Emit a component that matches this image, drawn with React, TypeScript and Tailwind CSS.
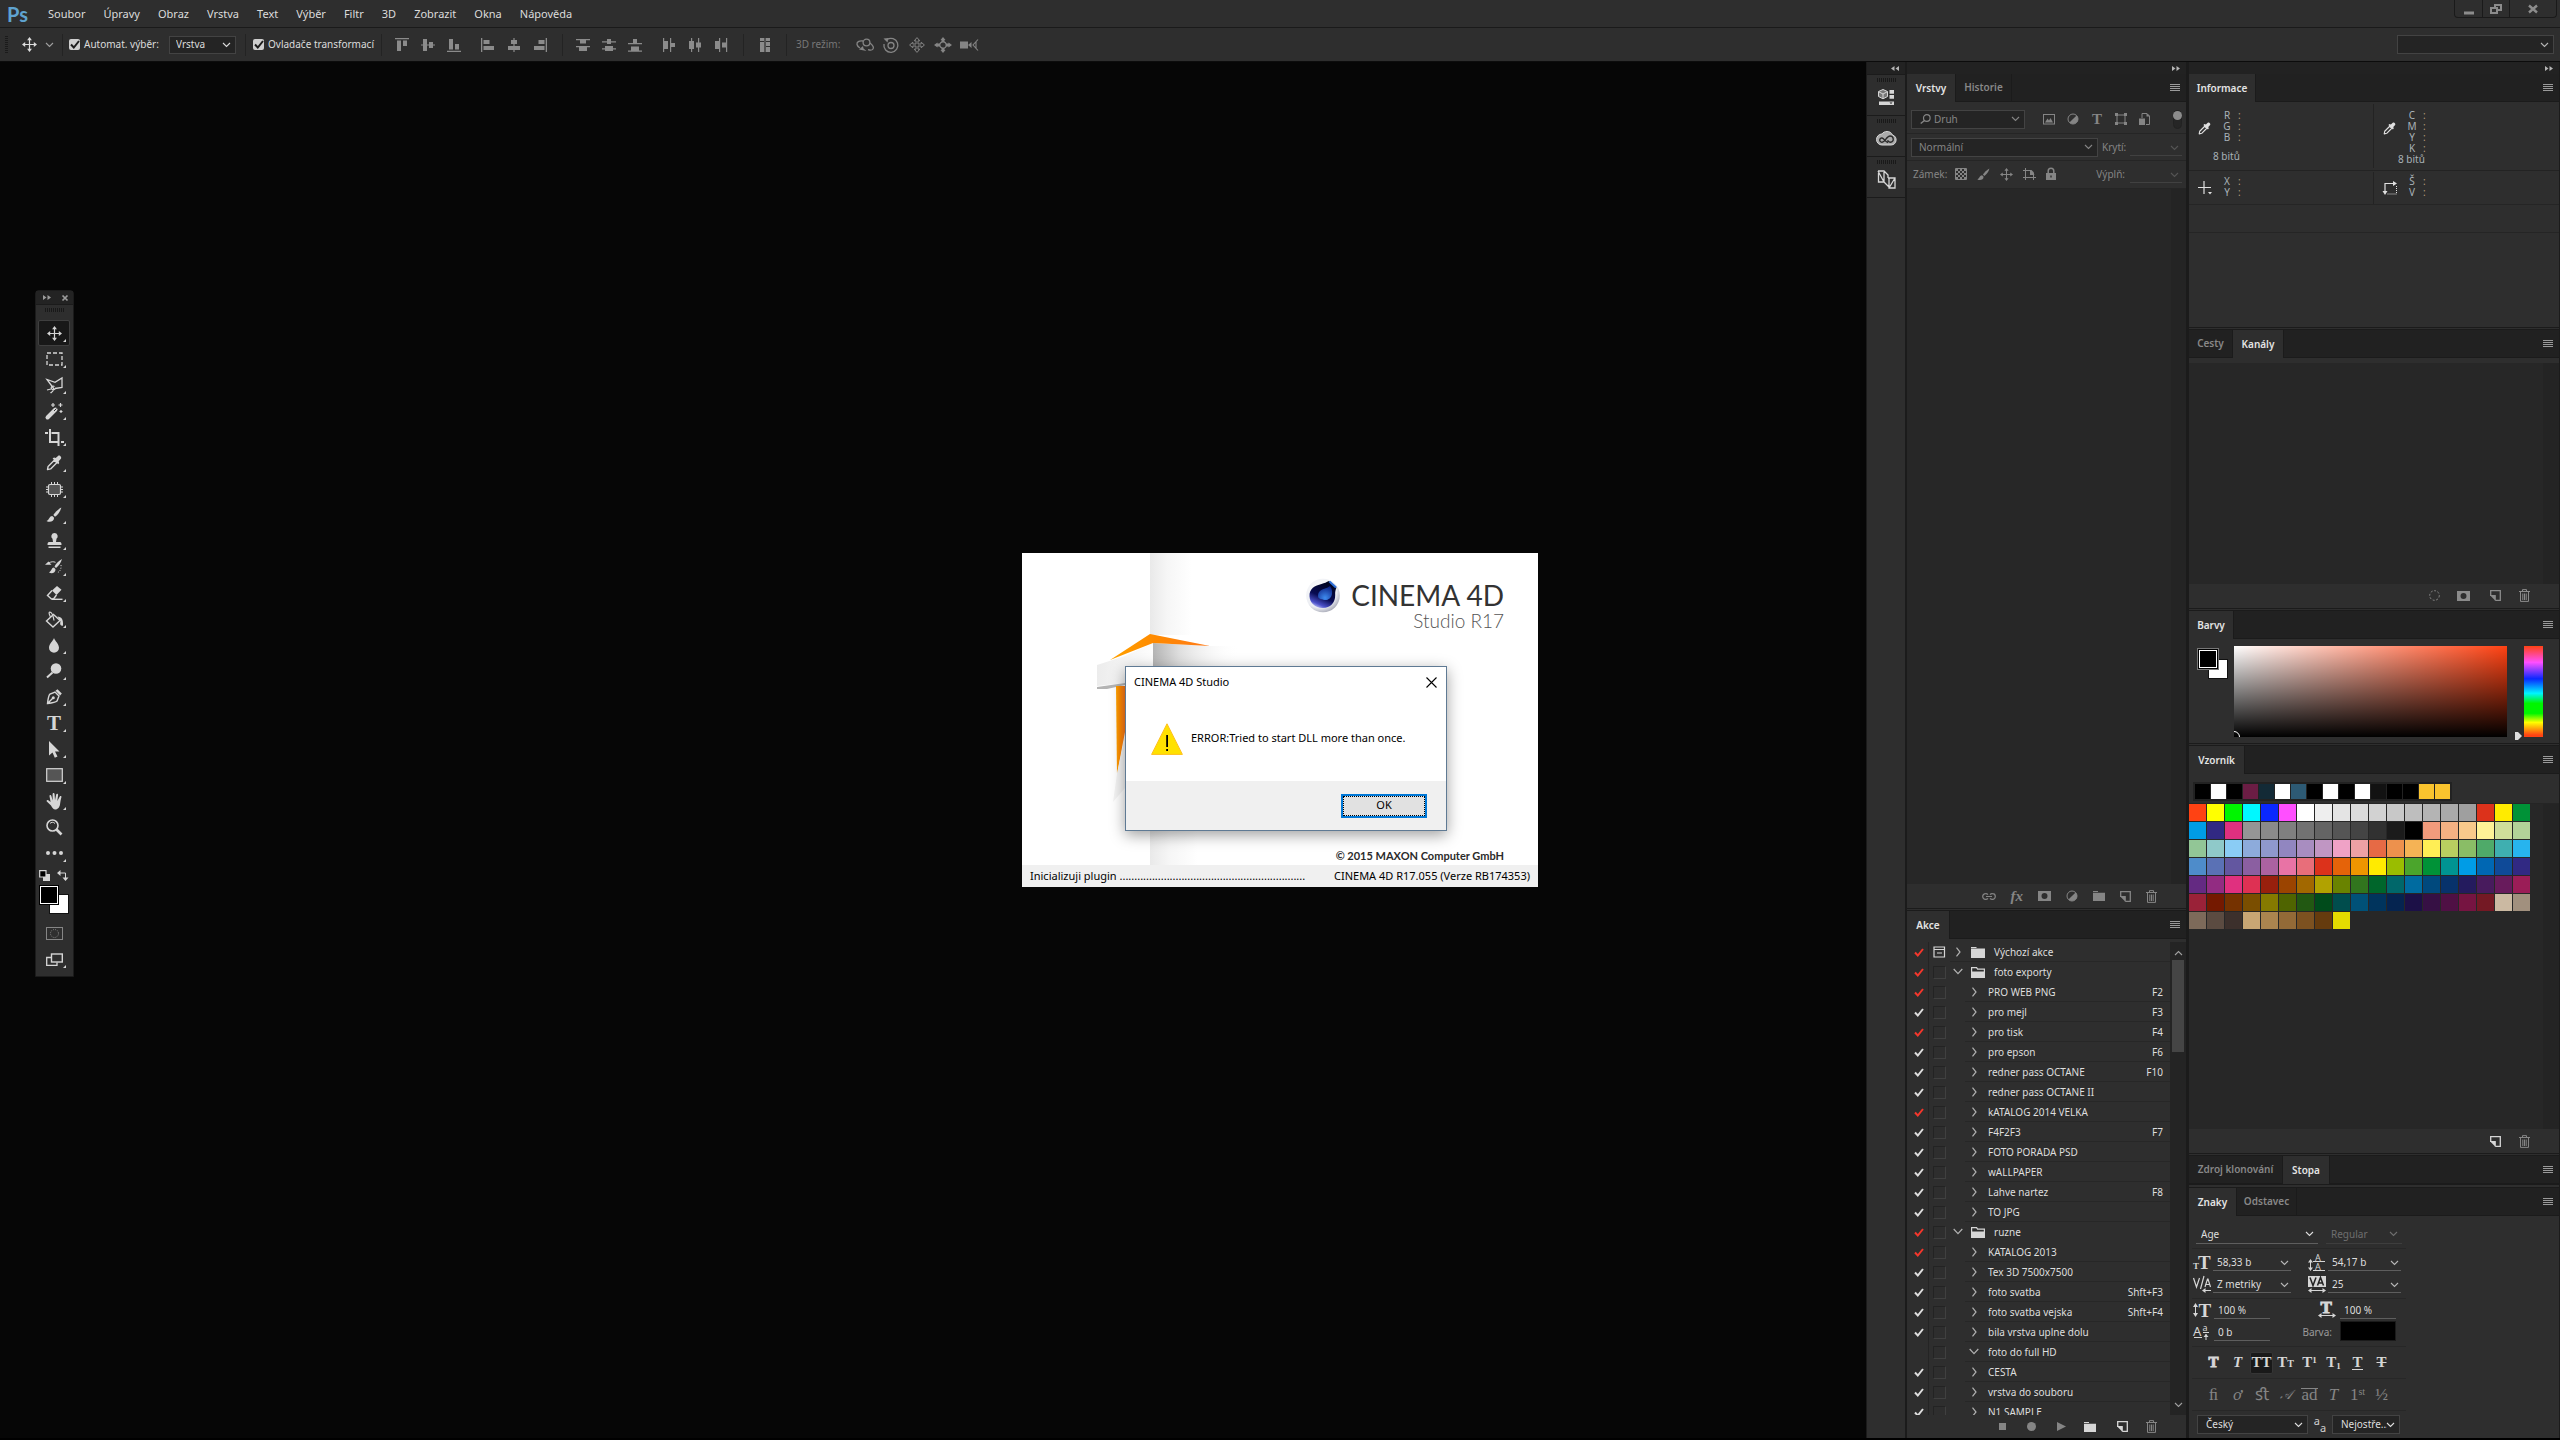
import React, { ReactNode } from "react";

const CZ = "font-['Noto_Sans','Open_Sans',sans-serif]";

/* ---------- small drawing helpers ---------- */

type IconProps = { w?: number; h?: number; box?: string; children: ReactNode; className?: string };

function Icon({ w = 16, h = 16, box, children, className = "" }: IconProps) {
  return (
    <svg
      width={w}
      height={h}
      viewBox={box ?? `0 0 ${w} ${h}`}
      fill="none"
      stroke="none"
      aria-hidden="true"
      className={`block shrink-0 overflow-visible ${className}`}
    >
      {children}
    </svg>
  );
}

function Chevron({ className = "" }: { className?: string }) {
  return (
    <Icon w={9} h={6} className={className}>
      <path d="M1 1l3.5 3.5L8 1" stroke="currentColor" strokeWidth="1.1" />
    </Icon>
  );
}

function MoveGlyph({ size = 16, className = "" }: { size?: number; className?: string }) {
  return (
    <Icon w={size} h={size} box="0 0 16 16" className={className}>
      <path d="M8 2v12M2 8h12" stroke="currentColor" strokeWidth="1.3" />
      <path
        d="M8 0l2.6 3.4H5.4zM8 16l2.6-3.4H5.4zM0 8l3.4-2.6v5.2zM16 8l-3.4-2.6v5.2z"
        fill="currentColor"
      />
    </Icon>
  );
}

function Eyedropper({ size = 16 }: { size?: number }) {
  return (
    <Icon w={size} h={size} box="0 0 16 16">
      <path d="M1.500 14.600l.6-3.200L8.300 5.200l2.500 2.500-6.200 6.200z" stroke="currentColor" strokeWidth="1.400" strokeLinejoin="round" />
      <path
        d="M6.600 3.600l1.400-1 1.700.5L12 .9c1.500-1.400 4.200 1.300 2.900 2.900l-2.200 2.400.5 1.700-1 1.400z"
        fill="currentColor"
      />
    </Icon>
  );
}

function BrushGlyph({ size = 16 }: { size?: number }) {
  return (
    <Icon w={size} h={size} box="0 0 16 16">
      <path d="M15.300.6c-3 1.600-6.500 4.800-8 7.500l1.700 1.700C11.800 8 14.600 4 15.300.6z" fill="currentColor" />
      <path d="M6.300 9c-3 0-2.700 3.600-5.800 5 3 1.800 7.700.8 7.600-3.200z" fill="currentColor" />
    </Icon>
  );
}

function TrashGlyph() {
  return (
    <Icon w={11} h={13}>
      <path d="M0 2.500h11M3.500 2V.6h4V2M1.500 3v9.400h8V3M3.800 4.500v6.500M5.500 4.500v6.500M7.200 4.500v6.500" stroke="currentColor" strokeWidth="1" />
    </Icon>
  );
}

function NewGlyph() {
  return (
    <Icon w={11} h={11}>
      <path d="M.7 5V.7h9.600v9.600H5.500" stroke="currentColor" strokeWidth="1.300" />
      <path d="M.2 5.600h5v5z" fill="currentColor" />
      <path d="M5.300 5.300v5.500M0 5.500h5.500" stroke="currentColor" />
    </Icon>
  );
}

function MaskGlyph() {
  return (
    <Icon w={13} h={10}>
      <path d="M0 0h13v10H0zM6.500 2a3 3 0 100 6 3 3 0 000-6z" fill="currentColor" fillRule="evenodd" />
    </Icon>
  );
}

function HalfGlyph() {
  return (
    <Icon w={12} h={12}>
      <circle cx="6" cy="6" r="5" stroke="currentColor" />
      <path d="M9.600 2.400A5 5 0 012.400 9.600z" fill="currentColor" />
    </Icon>
  );
}

function FolderGlyph({ open = false, className = "" }: { open?: boolean; className?: string }) {
  return (
    <Icon w={14} h={12} className={className}>
      {open ? (
        <>
          <path d="M.6 6V1.600h5l1 1.500h6.800V6" stroke="currentColor" strokeWidth="1.200" />
          <path d="M0 5.500h14V12H0z" fill="currentColor" />
        </>
      ) : (
        <path d="M0 1h5.500v1H0zM0 2.600h14V12H0z" fill="currentColor" />
      )}
    </Icon>
  );
}

function CheckGlyph() {
  return (
    <Icon w={10} h={9}>
      <path d="M1 4.500l2.800 3L9 1" stroke="currentColor" strokeWidth="2" />
    </Icon>
  );
}

function DoubleArrow({ left = false }: { left?: boolean }) {
  return (
    <Icon w={8} h={5} className={left ? "rotate-180" : ""}>
      <path d="M0 0l3.500 2.500L0 5zM4.500 0L8 2.500 4.500 5z" fill="currentColor" />
    </Icon>
  );
}

function Grip() {
  return (
    <div className="mx-auto flex gap-px">
      {Array.from({ length: 10 }, (_, i) => (
        <span key={i} className="h-1 w-px bg-[#191919]" />
      ))}
    </div>
  );
}

/* ---------- shared controls ---------- */

function Select({
  label,
  value,
  className,
  pad = "pl-2",
}: {
  label: string;
  value: string;
  className: string;
  pad?: string;
}) {
  return (
    <div className={`relative flex items-center ${className}`}>
      <select
        aria-label={label}
        defaultValue={value}
        className={`h-full w-full appearance-none overflow-hidden bg-transparent pr-3 outline-none ${pad}`}
      >
        <option>{value}</option>
      </select>
      <Chevron className="pointer-events-none absolute right-1" />
    </div>
  );
}

const BOXED = "border border-[#434343] bg-[#242424]";

function MenuLines() {
  return (
    <button aria-label="Nabídka panelu" className="mr-[6px] ml-auto flex flex-col gap-px">
      {[0, 1, 2, 3].map((i) => (
        <span key={i} className="h-px w-[10px] bg-[#9a9a9a]" />
      ))}
    </button>
  );
}

function Tabs({ items, active }: { items: [string, string][]; active: number }) {
  return (
    <div role="tablist" className="flex h-7 shrink-0 items-center bg-[#212121]">
      {items.map(([name, width], i) => (
        <button
          key={name}
          role="tab"
          aria-selected={i === active}
          className={`h-full shrink-0 border-r border-[#1b1b1b] text-center font-semibold whitespace-nowrap ${width} ${
            i === active ? "bg-[#2e2e2e] text-[#e4e4e4]" : "border-b text-[#888]"
          }`}
        >
          {name}
        </button>
      ))}
      <div className="flex h-full flex-1 items-center border-b border-[#1b1b1b]">
        <MenuLines />
      </div>
    </div>
  );
}

const Gap = ({ tall = false }: { tall?: boolean }) => (
  <div className={`shrink-0 border-y border-[#1b1b1b] bg-[#2e2e2e] ${tall ? "h-1" : "h-[3px]"}`} />
);

/* ---------- top bars ---------- */

const MENUS = ["Soubor", "Úpravy", "Obraz", "Vrstva", "Text", "Výběr", "Filtr", "3D", "Zobrazit", "Okna", "Nápověda"];

function MenuBar() {
  return (
    <header className="flex h-7 shrink-0 items-center border-b border-[#1a1a1a] bg-[#2e2e2e] text-[11px] text-[#dcdcdc]">
      <span className="w-[39px] pl-[7px] font-['Lato'] text-[20px] leading-6 font-bold text-[#5fa3d0]">Ps</span>
      <nav className="flex">
        {MENUS.map((m) => (
          <button key={m} className="px-[9px] leading-6">
            {m}
          </button>
        ))}
      </nav>
      <div className="mr-[3px] ml-auto flex h-[18px] self-start rounded-b border border-t-0 border-[#1a1a1a] text-[#8c8c8c]">
        <button aria-label="Minimalizovat" className="flex w-7 items-center justify-center border-r border-[#1a1a1a]">
          <Icon w={10} h={12}>
            <path d="M0 8.500h10v3H0z" fill="currentColor" />
          </Icon>
        </button>
        <button aria-label="Obnovit" className="flex w-[27px] items-center justify-center border-r border-[#1a1a1a]">
          <Icon w={12} h={10}>
            <path d="M5 4V1h6v5H8M1 4h6v5H1z" stroke="currentColor" strokeWidth="2" />
          </Icon>
        </button>
        <button aria-label="Zavřít" className="flex w-[46px] items-center justify-center">
          <Icon w={10} h={8}>
            <path d="M1 .5l8 7M9 .5l-8 7" stroke="currentColor" strokeWidth="2.400" />
          </Icon>
        </button>
      </div>
    </header>
  );
}

const ALIGN: string[] = [
  "M0 0h14v1.300H0zM2 2.500h4V13H2zM8 2.500h4V8H8z",
  "M0 6.400h14v1.200H0zM2 1h4v12H2zM8 4h4v6H8z",
  "M0 12.700h14V14H0zM2 1h4v10.500H2zM8 6h4v5.500H8z",
  "M0 0h1.300v14H0zM2.500 2h6v4h-6zM2.500 8H13v4H2.500z",
  "M6.400 0h1.200v14H6.400zM4 2h6v4H4zM1 8h12v4H1z",
  "M12.700 0H14v14h-1.300zM5.500 2h6v4h-6zM1 8h10.500v4H1z",
];
const DISTRIBUTE: string[] = [
  "M0 1h14v1.200H0zM4 2h6v3.500H4zM0 8h14v1.200H0zM3 9h8v4H3z",
  "M0 3.200h14v1.200H0zM5 1h4v5H5zM0 10.200h14v1.200H0zM3 8h8v5H3z",
  "M0 5h14v1.200H0zM5 1h4v4.500H5zM0 12.500h14v1.200H0zM3 8.500h8v4H3z",
  "M1 0h1.200v14H1zM2 3h4v8H2zM8 0h1.200v14H8zM9 5h4v4H9z",
  "M3 0h1.200v14H3zM1 3h5v8H1zM10 0h1.200v14H10zM8 4.500h5v5H8z",
  "M5 0h1.200v14H5zM1 3h4v8H1zM12 0h1.200v14H12zM8 4.500h4v5H8z",
];

function PathIcons({ names, paths }: { names: string; paths: string[] }) {
  return (
    <div className="flex gap-3">
      {paths.map((d, i) => (
        <button key={i} aria-label={`${names} ${i + 1}`}>
          <Icon w={14} h={14}>
            <path d={d} fill="currentColor" />
          </Icon>
        </button>
      ))}
    </div>
  );
}

function TickBox({ label }: { label: string }) {
  return (
    <label className="flex items-center gap-1 whitespace-nowrap">
      <span className="relative flex size-[11px] items-center justify-center rounded-xs bg-[#cfcfcf] text-[#1c1c1c]">
        <input type="checkbox" defaultChecked className="absolute inset-0 appearance-none" />
        <CheckGlyph />
      </span>
      {label}
    </label>
  );
}

const GROUP = "flex h-[22px] shrink-0 items-center border-r border-[#232323]";

function OptionsBar() {
  return (
    <div className="flex h-[34px] shrink-0 items-center border-b border-[#0c0c0c] bg-[#2e2e2e] text-[#dcdcdc]">
      <div className={`w-[63px] ${GROUP}`}>
        <div className="ml-[5px] flex flex-col gap-px">
          {Array.from({ length: 9 }, (_, i) => (
            <span key={i} className="h-px w-[3px] bg-[#1b1b1b]" />
          ))}
        </div>
        <MoveGlyph size={15} className="ml-[14px]" />
        <Chevron className="ml-2 text-[#a0a0a0]" />
      </div>
      <div className={`w-[183px] justify-between pr-[9px] pl-[6px] ${GROUP}`}>
        <TickBox label="Automat. výběr:" />
        <Select label="Automatický výběr" value="Vrstva" pad="pl-[6px]" className={`h-[18px] w-[67px] ${BOXED}`} />
      </div>
      <div className={`w-[136px] pl-[7px] ${GROUP}`}>
        <TickBox label="Ovladače transformací" />
      </div>
      <div className={`w-[181px] gap-5 pl-[13px] text-[#8b8b8b] ${GROUP}`}>
        <PathIcons names="Zarovnat" paths={ALIGN.slice(0, 3)} />
        <PathIcons names="Zarovnat svisle" paths={ALIGN.slice(3)} />
      </div>
      <div className={`w-[181px] gap-5 pl-[13px] text-[#8b8b8b] ${GROUP}`}>
        <PathIcons names="Rozmístit" paths={DISTRIBUTE.slice(0, 3)} />
        <PathIcons names="Rozmístit vodorovně" paths={DISTRIBUTE.slice(3)} />
      </div>
      <div className={`w-[43px] justify-center text-[#8b8b8b] ${GROUP}`}>
        <PathIcons names="Automaticky zarovnat" paths={["M2 0h4v3H2zM2 4h4v10H2zM6.600 0h.8v14h-.8zM8 0h4v3H8zM8 4h4v4H8zM8 9h4v5H8z"]} />
      </div>
      <span className="w-[69px] shrink-0 pl-[9px] whitespace-nowrap text-[#777]">3D režim:</span>
      <div className="flex gap-2 text-[#858585]">
        <Icon w={18} h={16}>
          <circle cx="10.500" cy="5.500" r="3.400" stroke="currentColor" strokeWidth="1.300" />
          <path d="M7 4C3 3.500.5 5 1 7.500c.3 1.500 1.500 2.600 3 3.500M14 6c2.500 2 4 4.500 3 6-.8 1.200-3 1.300-5 .6" stroke="currentColor" strokeWidth="1.300" />
          <path d="M3 12.500l4-3.500.5 2.500 3 2.500z" fill="currentColor" />
        </Icon>
        <Icon w={18} h={16}>
          <circle cx="9" cy="8.500" r="3" stroke="currentColor" strokeWidth="1.300" />
          <path d="M5 2.500a7 7 0 11-3 4.500" stroke="currentColor" strokeWidth="1.300" />
          <path d="M1.500 1.500l5-.5-1 4.500z" fill="currentColor" />
        </Icon>
        <Icon w={18} h={16}>
          <path
            d="M9 .6l2.800 3.200H10V7h3.200V5.200L16.400 8l-3.200 2.800V9H10v3.200h1.800L9 15.400l-2.800-3.200H8V9H4.800v1.800L1.600 8l3.200-2.800V7H8V3.800H6.200z"
            stroke="currentColor"
            strokeWidth="1"
          />
        </Icon>
        <Icon w={18} h={16}>
          <circle cx="9" cy="8" r="3.200" stroke="currentColor" strokeWidth="1.200" />
          <path d="M9 0l2.500 3h-1v2h-3V3h-1zM9 16l2.500-3h-1v-2h-3v2h-1zM0 8l3.500-2.500v1H6v3H3.500v1zM18 8l-3.500-2.500v1H12v3h2.500v1z" fill="currentColor" />
        </Icon>
        <Icon w={18} h={16}>
          <path d="M0 4.500h8v7H0zM8 8l3.500-3v6z" fill="currentColor" />
          <path d="M18 2.500L13 8l5 5.500M16 4.500v7" stroke="currentColor" strokeWidth="1.100" />
        </Icon>
      </div>
      <Select label="Pracovní plocha" value="" className={`mr-[6px] ml-auto h-[19px] w-[157px] text-[#b5b5b5] ${BOXED}`} />
    </div>
  );
}

/* ---------- tool palette ---------- */

const TOOLS: [string, ReactNode][] = [
  ["Přesun", <MoveGlyph key="i" size={15} />],
  [
    "Výběr obdélníkem",
    <Icon key="i" w={17} h={14}>
      <rect x="1" y="1" width="15" height="12" stroke="currentColor" strokeWidth="1.300" strokeDasharray="4 2" />
    </Icon>,
  ],
  [
    "Laso",
    <Icon key="i" w={17} h={17}>
      <path d="M8 12L1 2.500l8 2.800L16 1v9.500l-7 1" stroke="currentColor" strokeWidth="1.300" />
      <path d="M8.500 9.500c-2-1-4 .5-3 2.200s4 1 3.500-.7M7.500 12.500C7 15 5 15.500 4.500 16M5 12l-4 1" stroke="currentColor" strokeWidth="1.200" />
    </Icon>,
  ],
  [
    "Kouzelná hůlka",
    <Icon key="i" w={18} h={17}>
      <path d="M2.500 14.500L10.500 6.500" stroke="currentColor" strokeWidth="4" strokeLinecap="round" />
      <path d="M9 8l2.500-2.500" stroke="#2e2e2e" strokeWidth="1" />
      <path d="M8 0v4M6 2h4M15.500 0v4M13.500 2h4M16 7v3M14.500 8.500h3" stroke="currentColor" strokeWidth="1.200" />
    </Icon>,
  ],
  [
    "Oříznutí",
    <Icon key="i" w={19} h={17}>
      <path d="M0 4h3M5 0v13h9M6.500 4H13.500v13M16 13h3" stroke="currentColor" strokeWidth="2" />
    </Icon>,
  ],
  ["Kapátko", <Eyedropper key="i" />],
  [
    "Záplata",
    <Icon key="i" w={17} h={15}>
      <rect x="2.500" y="2.500" width="12" height="10" rx="1.500" fill="#555" stroke="currentColor" strokeWidth="1.200" />
      <path d="M5.500 0v3M8.500 0v3M11.500 0v3M5.500 12v3M8.500 12v3M11.500 12v3M0 5h3M0 7.500h3M0 10h3M14 5h3M14 7.500h3M14 10h3" stroke="currentColor" />
    </Icon>,
  ],
  ["Štětec", <BrushGlyph key="i" />],
  [
    "Klonovací razítko",
    <Icon key="i" w={15} h={16}>
      <path d="M7.500 0a3.200 3.200 0 012 5.700L9 9h4c1 0 1.500.7 1.500 3H.5c0-2.300.5-3 1.500-3h4l-.5-3.300A3.200 3.200 0 017.500 0zM1.500 13.500h12V15h-12z" fill="currentColor" />
    </Icon>,
  ],
  [
    "Štětec historie",
    <Icon key="i" w={18} h={16}>
      <path d="M17 0c-3 1.500-6 4.500-7.500 7.500l1.500 1.500c3-2.500 5-5.500 6-9zM9 8.500c-2.600 0-2.200 3.500-5 5 2.600 1.700 6.600.6 6.500-3.200zM0 5.800L3.500 2.500l3 3.300z" fill="currentColor" />
      <path d="M4 4c2-1.500 4.500-1.500 6.500-.7" stroke="currentColor" />
      <path d="M16 6c.5 4-1 7-4.500 8" stroke="currentColor" strokeDasharray="1 1.500" />
    </Icon>,
  ],
  [
    "Guma",
    <Icon key="i" w={17} h={15}>
      <path d="M6 4.500L11 0l4.500 3.700-5 5.300z" fill="currentColor" />
      <path d="M6 4.500L1.500 9.500 5.500 13h2l3-4" stroke="currentColor" strokeWidth="1.400" />
      <path d="M6 13.300h10.500" stroke="currentColor" strokeWidth="1.400" />
    </Icon>,
  ],
  [
    "Plechovka barvy",
    <Icon key="i" w={19} h={17}>
      <path d="M8.500 3.500l6.500 6-7 6.500L1.500 10z" stroke="currentColor" strokeWidth="1.400" />
      <path d="M9 9.500c-.5-3-2-8-4-8.300C3 1 5 5 5.500 6" stroke="currentColor" strokeWidth="1.200" />
      <path d="M12.500 5.500c4 .2 6 3 5.500 9-2.500 1-3.500-1.500-2.500-4z" fill="currentColor" />
    </Icon>,
  ],
  [
    "Rozostření",
    <Icon key="i" w={12} h={15}>
      <path d="M6 0c1 3 5 6 5 9.800A5 5 0 011 9.800C1 6 5 3 6 0z" fill="currentColor" />
    </Icon>,
  ],
  [
    "Zesvětlení",
    <Icon key="i" w={16} h={16}>
      <circle cx="10" cy="5.500" r="5.300" fill="currentColor" />
      <path d="M6.500 9.500L1 14.500" stroke="currentColor" strokeWidth="2" />
    </Icon>,
  ],
  [
    "Pero",
    <Icon key="i" w={16} h={16}>
      <path d="M1.500 14.500C2 10 2.500 6.500 4 5l5-2 4 4-2 5c-1.500 1.500-5 2-9.500 2.500zM1.500 14.500L7 9" stroke="currentColor" strokeWidth="1.400" />
      <circle cx="7.300" cy="8.700" r="1.500" fill="currentColor" />
      <path d="M9.500 1.800L11.500.2l4.300 4.300-1.600 2z" fill="currentColor" />
    </Icon>,
  ],
  ["Text", <span key="i" className="font-['Liberation_Serif'] text-[21px] leading-none font-bold">T</span>],
  [
    "Výběr cesty",
    <Icon key="i" w={12} h={17}>
      <path d="M1 0l10.500 10.500H7l2.500 5-2.700 1.300-2.300-5.300L1 14.500z" fill="currentColor" />
    </Icon>,
  ],
  [
    "Obdélník",
    <Icon key="i" w={17} h={14}>
      <rect x=".7" y=".7" width="15.600" height="12.600" fill="#555" stroke="currentColor" strokeWidth="1.200" />
    </Icon>,
  ],
  [
    "Ručička",
    <Icon key="i" w={17} h={17}>
      <path
        d="M5 12.500L.8 8.500C0 7.400 1.400 6.400 2.300 7.200L4.600 9 3.500 3.200c-.2-1.400 1.500-1.600 1.800-.4L6.700 7.500 6.600 1.200c0-1.500 1.900-1.500 2 0L9 7.200 10.200 1.600c.3-1.300 2-1 1.900.3l-.8 6 2.500-4.500c.6-1 2-.4 1.600.8C14.600 7 14.400 9 14 11.500 13.600 14 12 16.500 9.300 16.500c-2 0-3.200-1.700-4.300-4z"
        fill="currentColor"
      />
    </Icon>,
  ],
  [
    "Lupa",
    <Icon key="i" w={17} h={17}>
      <circle cx="6.500" cy="6.500" r="5.500" stroke="currentColor" strokeWidth="1.600" />
      <path d="M4 4.500c1-1.500 3.500-1.700 5 0" stroke="currentColor" />
      <path d="M10.500 10.500l5 5" stroke="currentColor" strokeWidth="2.600" />
    </Icon>,
  ],
  [
    "Další nástroje",
    <Icon key="i" w={17} h={4}>
      <path d="M2 0a2 2 0 100 4 2 2 0 000-4zM8.500 0a2 2 0 100 4 2 2 0 000-4zM15 0a2 2 0 100 4 2 2 0 000-4z" fill="currentColor" />
    </Icon>,
  ],
];

function ToolButton({ name, icon, on = false, corner = true }: { name: string; icon: ReactNode; on?: boolean; corner?: boolean }) {
  return (
    <button
      aria-label={name}
      className={`relative flex h-[26px] w-8 items-center justify-center rounded-xs border ${
        on ? "border-[#3f3f3f] bg-[#181818]" : "border-transparent"
      }`}
    >
      {icon}
      {corner && (
        <Icon w={3} h={3} className="absolute right-[3px] bottom-[3px]">
          <path d="M3 0v3H0z" fill="currentColor" />
        </Icon>
      )}
    </button>
  );
}

function ToolPalette() {
  return (
    <aside className="absolute top-[228px] left-[35px] flex w-[39px] flex-col items-center rounded-t border border-[#1b1b1b] bg-[#2e2e2e] pb-1 text-[#d6d6d6]">
      <div className="flex h-[14px] w-full shrink-0 items-center justify-between border-b border-[#1b1b1b] bg-[#232323] px-[7px] text-[#9b9b9b]">
        <DoubleArrow />
        <Icon w={6} h={6} className="-mr-[2px]">
          <path d="M.5.5l5 5M5.500.5l-5 5" stroke="currentColor" strokeWidth="1.700" />
        </Icon>
      </div>
      <div className="mt-[3px] mb-2">
        <Grip />
      </div>
      <div className="flex flex-col self-start pl-[2px]">
        {TOOLS.map(([name, icon], i) => (
          <ToolButton key={name} name={name} icon={icon} on={i === 0} corner={name !== "Lupa"} />
        ))}
      </div>
      <div className="mt-1 flex w-full justify-between px-[3px]">
        <button aria-label="Výchozí barvy">
          <Icon w={11} h={11}>
            <path d="M4 4h7v7H4z" fill="#d6d6d6" />
            <path d="M.7.7h6.300v6.300H.7z" fill="#000" stroke="#d6d6d6" strokeWidth="1.200" />
          </Icon>
        </button>
        <button aria-label="Prohodit barvy" className="mr-[2px]">
          <Icon w={11} h={11}>
            <path d="M2 3h6.500v5" stroke="currentColor" />
            <path d="M0 3l3.500-3v6zM8.500 11l3-3.500h-6z" fill="currentColor" />
          </Icon>
        </button>
      </div>
      <div className="relative mt-1 mr-px h-[29px] w-[30px]">
        <button aria-label="Barva pozadí" className="absolute right-0 bottom-0 size-[20px] border border-[#111] bg-white" />
        <button aria-label="Barva popředí" className="absolute top-0 left-0 size-[20px] border border-black bg-white p-px">
          <span className="block size-full bg-black" />
        </button>
      </div>
      <div className="mt-[6px] flex flex-col self-start pl-[2px]">
        <ToolButton
          name="Rychlá maska"
          corner={false}
          icon={
            <Icon w={17} h={13} className="text-[#858585]">
              <rect x=".5" y=".5" width="16" height="12" stroke="currentColor" />
              <circle cx="8.500" cy="6.500" r="4" stroke="currentColor" strokeDasharray="1 1.100" />
            </Icon>
          }
        />
        <ToolButton
          name="Režim obrazovky"
          icon={
            <Icon w={17} h={13}>
              <path d="M5 4.500H.7v7.800H11V9.500" stroke="currentColor" strokeWidth="1.300" />
              <rect x="5.500" y="1" width="10.800" height="8" fill="#2e2e2e" stroke="currentColor" strokeWidth="1.400" />
            </Icon>
          }
        />
      </div>
    </aside>
  );
}

/* ---------- start-up window with error message ---------- */

function Splash() {
  return (
    <section className="absolute top-1/2 left-1/2 flex h-[334px] w-[516px] -translate-x-1/2 -translate-y-1/2 flex-col bg-white font-['Noto_Sans'] text-[11px] text-black">
      <svg viewBox="0 0 516 312" className="absolute top-0 left-0 h-[312px] w-full" aria-hidden="true">
        <defs>
          <linearGradient id="wall" x1="0" x2="1">
            <stop offset="0" stopColor="#e9e9e9" />
            <stop offset=".4" stopColor="#f6f6f6" />
            <stop offset="1" stopColor="#fff" />
          </linearGradient>
          <linearGradient id="shade" x1="0" x2="1">
            <stop offset="0" stopColor="#b4b4b4" />
            <stop offset=".3" stopColor="#dedede" />
            <stop offset="1" stopColor="#fff" stopOpacity="0" />
          </linearGradient>
          <linearGradient id="roof" x1="0" x2="1">
            <stop offset="0" stopColor="#ffa200" />
            <stop offset=".45" stopColor="#ff8a00" />
            <stop offset="1" stopColor="#ff7a1a" />
          </linearGradient>
          <linearGradient id="slab" x1="0" x2="1">
            <stop offset="0" stopColor="#ececec" />
            <stop offset="1" stopColor="#fdfdfd" />
          </linearGradient>
          <radialGradient id="ball" cx=".4" cy=".35" r=".68">
            <stop offset="0" stopColor="#fff" />
            <stop offset=".75" stopColor="#eceef3" />
            <stop offset="1" stopColor="#a9abb8" />
          </radialGradient>
          <linearGradient id="drop" x1=".7" y1=".1" x2=".3" y2="1">
            <stop offset="0" stopColor="#000420" />
            <stop offset=".55" stopColor="#080b52" />
            <stop offset=".85" stopColor="#4b50c8" />
            <stop offset="1" stopColor="#b9bcf5" />
          </linearGradient>
          <radialGradient id="lens" cx=".5" cy=".85" r=".9">
            <stop offset="0" stopColor="#3f8cf0" />
            <stop offset="1" stopColor="#08197c" />
          </radialGradient>
        </defs>
        <path d="M128 0h42v82h-42z" fill="url(#wall)" />
        <path d="M128 180h48v132h-48z" fill="url(#wall)" />
        <path d="M131 90l57 3h30v40h-87z" fill="url(#shade)" />
        <path d="M75 112l28-9 28-13v40l-28 0-28 3z" fill="url(#slab)" />
        <path d="M75 134l28-4v2l-18 4H75z" fill="#b4b4b4" />
        <path d="M88 107l40-26 60 12-57-3z" fill="url(#roof)" />
        <path d="M94 133h9v46l-8 42z" fill="url(#roof)" />
        <path d="M95 221l8-38v52l-12 14z" fill="#f4f4f4" />
        <circle cx="301" cy="42.500" r="16.800" fill="url(#ball)" />
        <path d="M287.500 43.500c-.5-8 5.500-11 12-12.500 3-.8 5-1.800 7.500-3l7.500 6.500c-1 2.500-1.500 4-1.300 7.500.3 8-5.700 13.500-13 13-7-.3-12.300-5-12.700-11.500z" fill="url(#drop)" />
        <path d="M307.500 28.500l6.500 6" stroke="#2e6fd8" strokeWidth="2.200" fill="none" />
        <path d="M296 43c0-4.500 3-6.500 7-7.500 2-.6 3.500-1.500 5-2.500 1.500 2 2.500 4.500 2 8-.6 4-4 6.500-7.500 6-3.500-.2-6.500-1.500-6.500-4z" fill="url(#lens)" />
      </svg>
      <div className="relative mt-[25px] mr-[34px] self-end text-right font-['Lato'] text-[#333]">
        <h1 className="text-[28px] leading-[34px]">CINEMA 4D</h1>
        <p className="text-[19px] leading-[18px] font-light text-[#555]">Studio R17</p>
      </div>
      <p className="relative mt-auto mr-[34px] mb-[2px] self-end font-['Lato'] text-[11px] leading-[14px] font-bold text-[#2b2b2b]">
        © 2015 MAXON Computer GmbH
      </p>
      <div className="relative flex h-[22px] items-center justify-between bg-[#f0f0f0] px-2 whitespace-nowrap">
        <span>Inicializuji plugin ...............................................................</span>
        <span>CINEMA 4D R17.055 (Verze RB174353)</span>
      </div>
      <div
        role="alertdialog"
        aria-labelledby="err-title"
        className="absolute top-[113px] left-[103px] flex w-[322px] flex-col border border-[#5f7a94] bg-white shadow-[0_4px_14px_rgba(0,0,0,0.38)]"
      >
        <div className="flex h-[30px] items-center justify-between pr-[9px] pl-2">
          <h2 id="err-title">CINEMA 4D Studio</h2>
          <button aria-label="Zavřít">
            <Icon w={11} h={11}>
              <path d="M.5.5l10 10M10.500.5l-10 10" stroke="#000" strokeWidth="1.100" />
            </Icon>
          </button>
        </div>
        <div className="flex h-[84px] items-center gap-2 pl-[25px] whitespace-nowrap">
          <Icon w={32} h={32}>
            <path d="M16 .8L31.400 31.400H.6z" fill="#ffe100" stroke="#ffbf1e" strokeWidth="1" />
            <path d="M15.200 12h1.800v12h-1.800zM15.200 26h1.800v2h-1.800z" fill="#000" />
          </Icon>
          <p className="mb-[2px]">ERROR:Tried to start DLL more than once.</p>
        </div>
        <div className="flex h-[49px] items-center justify-end bg-[#f0f0f0] pr-[19px]">
          <button className="h-6 w-[86px] border-2 border-[#0078d7] bg-[#e1e1e1] outline-1 -outline-offset-3 outline-black outline-dotted">
            OK
          </button>
        </div>
      </div>
    </section>
  );
}

/* ---------- collapsed icon dock ---------- */

function IconDock() {
  const blocks: [string, ReactNode][] = [
    [
      "Vlastnosti",
      <Icon key="i" w={17} h={17}>
        <path d="M5 .5l4.500 2v5L5 9.800.5 7.500v-5z" fill="#777" stroke="currentColor" />
        <path d="M5 5v4.500M5 5L.8 2.800M5 5l4.200-2.200" stroke="currentColor" />
        <path d="M11.500 1H16v3.800h-4.500zM11.500 6H16v3.800h-4.500zM1 12.500h15V16H1z" fill="currentColor" />
        <path d="M11.500 13.500h3l-1.500 1.600z" fill="#222" />
      </Icon>,
    ],
    [
      "Knihovny",
      <Icon key="i" w={21} h={15}>
        <path d="M6 14A5.500 5.500 0 016 3c1.500-3 8.500-4 10.500 1 5.500 1.500 4.500 10-1.500 10z" fill="#aaa" stroke="currentColor" />
        <path d="M12 11.500C9 11 8.500 7.500 6 7s-3.500 4 0 4.300c3 .2 4.500-6.300 8-6.300 4 0 4.500 6 .5 6.300-1.500 0-2-.6-3-2" stroke="#2a2a2a" strokeWidth="1.400" />
      </Icon>,
    ],
    [
      "Kompozice vrstev",
      <Icon key="i" w={19} h={19}>
        <path d="M1 1h6l4 4v3M1 1l0 0L7 12H1.500V3M11 8h7v10h-6V8M12 18l6-10M7 12l5 5M7 2v10" stroke="currentColor" strokeWidth="1.300" />
      </Icon>,
    ],
  ];
  return (
    <aside className="flex w-[38px] shrink-0 flex-col bg-[#2e2e2e] text-[#d6d6d6]">
      <div className="flex h-[13px] shrink-0 items-center justify-end border-b border-[#1b1b1b] bg-[#222] pr-[6px] text-[#b5b5b5]">
        <DoubleArrow left />
      </div>
      {blocks.map(([name, icon]) => (
        <div key={name} className="flex h-[41px] shrink-0 flex-col border-b border-[#1b1b1b] pt-[3px]">
          <Grip />
          <button aria-label={name} className="flex flex-1 items-center justify-center pb-[2px]">
            {icon}
          </button>
        </div>
      ))}
    </aside>
  );
}

/* ---------- layers + actions column ---------- */

function LayersPanel() {
  return (
    <section className="flex min-h-0 flex-1 flex-col">
      <Tabs
        active={0}
        items={[
          ["Vrstvy", "w-[49px]"],
          ["Historie", "w-[56px]"],
        ]}
      />
      <div className="flex h-8 shrink-0 items-center border-b border-[#252525] pt-[3px] pl-1 text-[#858585]">
        <div className={`relative flex h-[19px] w-[114px] items-center ${BOXED}`}>
          <Icon w={11} h={10} className="ml-2">
            <circle cx="6.800" cy="4" r="3.300" stroke="currentColor" strokeWidth="1.200" />
            <path d="M4.500 6.500L.7 9.500" stroke="currentColor" strokeWidth="1.500" />
          </Icon>
          <Select label="Filtr vrstev" value="Druh" className="h-full flex-1" pad="pl-[3px]" />
        </div>
        <div className="ml-[18px] flex items-center gap-3">
          <Icon w={12} h={11}>
            <rect x=".5" y=".5" width="11" height="9.500" stroke="currentColor" />
            <path d="M2 8.500l2.500-4 1.500 2 1.500-2.500 2.500 4.500z" fill="currentColor" />
          </Icon>
          <HalfGlyph />
          <span className="w-3 text-center font-['Liberation_Serif'] text-[15px] leading-none font-bold">T</span>
          <Icon w={12} h={12}>
            <path d="M2 2h8v8H2z" stroke="currentColor" />
            <path d="M0 0h3v3H0zM9 0h3v3H9zM0 9h3v3H0zM9 9h3v3H9z" fill="currentColor" />
          </Icon>
          <Icon w={11} h={12}>
            <path d="M3 5V.5h5l2.500 2.500v8.500H7" stroke="currentColor" />
            <path d="M7.500 0v3.500H11M0 5.500h6V12H0z" fill="currentColor" />
          </Icon>
        </div>
        <label className="relative mr-1 ml-auto flex h-[19px] w-[9px] rounded-full border border-[#222] bg-[#262626]">
          <input type="checkbox" aria-label="Filtrování zapnuto" className="absolute inset-0 appearance-none" />
          <span className="-ml-px size-[9px] shrink-0 rounded-full bg-[#8c8c8c]" />
        </label>
      </div>
      <div className="flex h-[27px] shrink-0 items-center border-b border-[#252525] pr-1 pl-1 text-[#858585]">
        <Select label="Režim prolnutí" value="Normální" pad="pl-[7px]" className={`h-[19px] w-[187px] ${BOXED}`} />
        <label className="ml-1 w-7" htmlFor="opacity">
          Krytí:
        </label>
        <div className="relative h-[17px] flex-1 border-b border-[#414141]">
          <input id="opacity" className="size-full bg-transparent outline-none" />
          <Chevron className="absolute top-[6px] right-[3px] text-[#555]" />
        </div>
      </div>
      <div className="flex h-7 shrink-0 items-center border-b border-[#252525] pr-1 pb-px pl-[6px] text-[#858585]">
        <span className="w-[42px]">Zámek:</span>
        <div className="flex items-center gap-[10px]">
          <Icon w={12} h={12}>
            <path d="M.5.5h11v11H.5z" stroke="currentColor" />
            <path d="M1 1h2v2H1zM5 1h2v2H5zM9 1h2v2H9zM3 3h2v2H3zM7 3h2v2H7zM1 5h2v2H1zM5 5h2v2H5zM9 5h2v2H9zM3 7h2v2H3zM7 7h2v2H7zM1 9h2v2H1zM5 9h2v2H5zM9 9h2v2H9z" fill="currentColor" />
          </Icon>
          <BrushGlyph size={13} />
          <MoveGlyph size={13} />
          <Icon w={13} h={12}>
            <path d="M2.500 0v12M0 2.500h7M10.500 6v6M0 9.500h13" stroke="currentColor" />
            <path d="M7 2.500l4 4" stroke="currentColor" />
            <path d="M7 2h1.500L11 4.500V7H7z" fill="currentColor" />
          </Icon>
          <Icon w={10} h={12}>
            <path d="M0 5h10v7H0z" fill="currentColor" />
            <path d="M2.200 5V3a2.800 2.800 0 015.600 0v2" stroke="currentColor" strokeWidth="1.500" />
            <path d="M4.300 7.500h1.400v2H4.300z" fill="#2e2e2e" />
          </Icon>
        </div>
        <label className="mr-[5px] ml-auto" htmlFor="fill">
          Výplň:
        </label>
        <div className="relative h-[17px] w-[52px] border-b border-[#414141]">
          <input id="fill" className="size-full bg-transparent outline-none" />
          <Chevron className="absolute top-[6px] right-[3px] text-[#555]" />
        </div>
      </div>
      <div className="flex min-h-0 flex-1 justify-end bg-[#272727]">
        <div className="w-[15px] bg-[#242424]" />
      </div>
      <div className="flex h-6 shrink-0 items-center justify-end gap-[15px] pr-[29px] text-[#858585]">
        <button aria-label="Propojit">
          <Icon w={14} h={7}>
            <path d="M6 1.700A3 3 0 003.500.7 2.800 2.800 0 003.500 6.300 3 3 0 006 5.300M8 1.700a3 3 0 012.500-1 2.800 2.800 0 010 5.600A3 3 0 018 5.300M4 3.500h6" stroke="currentColor" strokeWidth="1.200" />
          </Icon>
        </button>
        <button aria-label="Styl" className="font-['Liberation_Serif'] text-[15px] leading-none font-bold italic">
          fx
        </button>
        <button aria-label="Maska">
          <MaskGlyph />
        </button>
        <button aria-label="Úprava">
          <HalfGlyph />
        </button>
        <button aria-label="Skupina">
          <Icon w={12} h={10}>
            <path d="M0 0h5v1H0zM0 1.700h12V10H0z" fill="currentColor" />
          </Icon>
        </button>
        <button aria-label="Nová vrstva">
          <NewGlyph />
        </button>
        <button aria-label="Odstranit">
          <TrashGlyph />
        </button>
      </div>
    </section>
  );
}

type Action = { n: string; k?: string; red?: boolean; group?: "open" | "closed"; off?: boolean; open?: boolean; dlg?: boolean };

const ACTIONS: Action[] = [
  { n: "Výchozí akce", red: true, group: "closed", dlg: true },
  { n: "foto exporty", red: true, group: "open" },
  { n: "PRO WEB PNG", k: "F2", red: true },
  { n: "pro mejl", k: "F3" },
  { n: "pro tisk", k: "F4", red: true },
  { n: "pro epson", k: "F6" },
  { n: "redner pass OCTANE", k: "F10" },
  { n: "redner pass OCTANE II" },
  { n: "kATALOG 2014 VELKA", red: true },
  { n: "F4F2F3", k: "F7" },
  { n: "FOTO PORADA PSD" },
  { n: "wALLPAPER" },
  { n: "Lahve nartez", k: "F8" },
  { n: "TO JPG" },
  { n: "ruzne", red: true, group: "open" },
  { n: "KATALOG 2013", red: true },
  { n: "Tex 3D 7500x7500" },
  { n: "foto svatba", k: "Shft+F3" },
  { n: "foto svatba vejska", k: "Shft+F4" },
  { n: "bila vrstva uplne dolu" },
  { n: "foto do full HD", off: true, open: true },
  { n: "CESTA" },
  { n: "vrstva do souboru" },
  { n: "N1 SAMPLE" },
];

function ActionRow({ a }: { a: Action }) {
  const expanded = a.group === "open" || a.open;
  return (
    <li className="flex h-5 items-center leading-3">
      <label className={`relative flex w-[21px] justify-end pr-1 ${a.red ? "text-[#f4372c]" : "text-[#dedede]"}`}>
        <input type="checkbox" aria-label={a.n} defaultChecked={!a.off} className="absolute inset-0 appearance-none" />
        {a.off ? <span className="h-2" /> : <CheckGlyph />}
      </label>
      <span className="mr-1 h-full w-px bg-[#242424]" />
      {a.dlg ? (
        <Icon w={13} h={12}>
          <path d="M1 1h10.500v10H1zM1 3.500h10.500M4 7h5" stroke="#d6d6d6" strokeWidth="1.200" />
        </Icon>
      ) : (
        <button aria-label={`Dialog ${a.n}`} className="size-[13px] border border-[#232323] border-r-[#404040] border-b-[#404040]" />
      )}
      <div
        className={`flex h-full flex-1 items-center border-b ${a.group ? "ml-1 pl-[3px]" : "ml-[19px] pl-1"} ${
          a.group === "open" ? "border-transparent" : "border-[#272727]"
        }`}
      >
        <button aria-label={`Rozbalit ${a.n}`} className="w-[10px] text-[#b0b0b0]">
          {expanded ? (
            <Icon w={10} h={7}>
              <path d="M.7 1L5 5.700 9.300 1" stroke="currentColor" strokeWidth="1.200" />
            </Icon>
          ) : (
            <Icon w={10} h={10}>
              <path d="M3.500.7L7 5 3.500 9.300" stroke="currentColor" strokeWidth="1.200" />
            </Icon>
          )}
        </button>
        {a.group && <FolderGlyph open={a.group === "open"} className="ml-2 text-[#d6d6d6]" />}
        <span className="ml-[9px]">{a.n}</span>
        <span className="mr-[7px] ml-auto">{a.k}</span>
      </div>
    </li>
  );
}

function ActionsPanel() {
  return (
    <section className="flex shrink-0 flex-col">
      <Tabs active={0} items={[["Akce", "w-[43px]"]]} />
      <div className="mt-[3px] flex h-[473px] text-[#dedede]">
        <ul className="flex-1 overflow-hidden">
          {ACTIONS.map((a) => (
            <ActionRow key={a.n} a={a} />
          ))}
        </ul>
        <div className="flex w-4 flex-col items-center bg-[#242424] pt-2 text-[#a0a0a0]">
          <Chevron className="rotate-180" />
          <div className="mt-1 h-[92px] w-3 bg-[#454545]" />
          <Chevron className="mt-auto mb-[7px]" />
        </div>
      </div>
      <div className="flex h-[23px] items-center justify-end gap-[18px] pr-[29px] text-[#858585]">
        <button aria-label="Zastavit" className="size-[7px] bg-current" />
        <button aria-label="Nahrávat" className="ml-[3px] size-[9px] rounded-full bg-current" />
        <button aria-label="Přehrát" className="ml-[3px]">
          <Icon w={9} h={9}>
            <path d="M0 0l9 4.500L0 9z" fill="currentColor" />
          </Icon>
        </button>
        <button aria-label="Nová sada" className="text-[#d6d6d6]">
          <Icon w={12} h={10}>
            <path d="M0 0h5v1H0zM0 1.700h12V10H0z" fill="currentColor" />
          </Icon>
        </button>
        <button aria-label="Nová akce" className="ml-[3px] text-[#d6d6d6]">
          <NewGlyph />
        </button>
        <button aria-label="Odstranit akci">
          <TrashGlyph />
        </button>
      </div>
    </section>
  );
}

/* ---------- right column ---------- */

function InfoCell({ icon, rows, bits }: { icon: ReactNode; rows: string[]; bits?: boolean }) {
  return (
    <div className="flex pl-[9px] leading-[11px]">
      <div className={`flex w-[15px] text-[#e0e0e0] ${bits ? "items-start pt-3" : "items-center"}`}>{icon}</div>
      <div className="flex flex-col">
        {rows.map((r) => (
          <span key={r} className="flex h-[11px] items-center pl-[3px]">
            <span className="w-[22px] text-center">{r}</span>
            <span className="text-[#b39a78]">:</span>
          </span>
        ))}
        {bits && <span className="mt-auto">8 bitů</span>}
      </div>
    </div>
  );
}

function InfoPanel() {
  return (
    <section className="shrink-0">
      <Tabs active={0} items={[["Informace", "w-[67px]"]]} />
      <div className="h-[225px] text-[#a9b2b8]">
        <div className="flex h-[69px] border-b border-[#232323] py-[2px]">
          <div className="grid w-1/2 py-[6px]">
            <InfoCell icon={<Eyedropper size={13} />} rows={["R", "G", "B"]} bits />
          </div>
          <div className="-ml-px grid flex-1 border-l border-[#232323] py-[6px]">
            <InfoCell icon={<Eyedropper size={13} />} rows={["C", "M", "Y", "K"]} bits />
          </div>
        </div>
        <div className="flex h-[34px] border-b border-[#252525] pt-px">
          <div className="grid w-1/2 py-1">
            <InfoCell
              icon={
                <Icon w={14} h={14}>
                  <path d="M6 0v13M0 6.500h13" stroke="currentColor" strokeWidth="1.200" />
                  <path d="M10 11h4l-2 2.500z" fill="currentColor" />
                </Icon>
              }
              rows={["X", "Y"]}
            />
          </div>
          <div className="-ml-px grid flex-1 border-l border-[#232323] py-1">
            <InfoCell
              icon={
                <Icon w={14} h={14}>
                  <path d="M2 12V2.500h9" stroke="currentColor" strokeWidth="1.200" />
                  <path d="M10 0l4 2.500L10 5zM-.5 10h5L2 14z" fill="currentColor" />
                  <path d="M4.500 13h9V4" stroke="currentColor" strokeDasharray="1 1" />
                </Icon>
              }
              rows={["Š", "V"]}
            />
          </div>
        </div>
        <div className="h-7 border-b border-[#252525]" />
      </div>
    </section>
  );
}

function ChannelsPanel() {
  return (
    <section className="shrink-0">
      <Tabs
        active={1}
        items={[
          ["Cesty", "w-[44px]"],
          ["Kanály", "w-[51px]"],
        ]}
      />
      <div className="mt-[5px] flex h-[221px] justify-end bg-[#272727]">
        <div className="w-4 bg-[#242424]" />
      </div>
      <div className="flex h-6 items-center justify-end pr-[29px] pb-px text-[#8b8b8b]">
        <button aria-label="Načíst výběr">
          <Icon w={11} h={11}>
            <circle cx="5.500" cy="5.500" r="4.800" stroke="currentColor" strokeDasharray="2 1.600" />
          </Icon>
        </button>
        <button aria-label="Uložit masku" className="ml-[17px]">
          <MaskGlyph />
        </button>
        <button aria-label="Nový kanál" className="ml-5">
          <NewGlyph />
        </button>
        <button aria-label="Odstranit kanál" className="ml-[18px]">
          <TrashGlyph />
        </button>
      </div>
    </section>
  );
}

function ColorPanel() {
  return (
    <section className="shrink-0">
      <Tabs active={0} items={[["Barvy", "w-[45px]"]]} />
      <div className="flex h-[104px] pt-[7px] pr-4 pl-2">
        <div className="relative mt-[2px] h-[31px] w-[31px]">
          <button aria-label="Barva pozadí" className="absolute right-0 bottom-0 size-5 border border-[#111] bg-white" />
          <button aria-label="Barva popředí" className="absolute top-0 left-0 size-[22px] border border-[#777] bg-black p-px">
            <span className="block size-full border border-white bg-black" />
          </button>
        </div>
        <div className="relative ml-[6px] h-[91px] flex-1 overflow-hidden bg-[#ff4213] bg-[linear-gradient(to_top,#000,transparent),linear-gradient(to_right,#fff,transparent)]">
          <span className="absolute -bottom-[6px] -left-[6px] size-3 rounded-full border border-white" />
        </div>
        <div className="relative ml-[17px] h-[91px] w-[19px] bg-[linear-gradient(to_bottom,#ff4213,#ff4fff_18%,#0a28ff_36%,#00f5ff_52%,#00f500_63%,#00f500_74%,#ffff00_84%,#ff4213_98%)]">
          <Icon w={7} h={8} className="absolute -bottom-[3px] -left-[9px]">
            <path d="M0 0h3l4 4-4 4H0z" fill="#ddd" />
          </Icon>
        </div>
      </div>
    </section>
  );
}

const RECENT = ["#000000", "#ffffff", "#000000", "#6b1d44", "#132a36", "#ffffff", "#2d5a74", "#000000", "#ffffff", "#000000", "#ffffff", "#121212", "#000000", "#000000", "#fac42e", "#fac42e"];

const SWATCHES = `
ff4213 ffff00 00f500 00f8ff 0a28ff ff4fff ffffff eeeeee e4e4e4 dbdbdb d2d2d2 c8c8c8 bebebe b4b4b4 aaaaaa 9f9f9f dc321b ffeb00 009237
009ce6 312983 e0307f 959595 8a8a8a 7f7f7f 727272 646464 555555 444444 313131 1b1b1b 000000 f19b7c f4b183 f8c98b fff297 d0de9a b2d298
92c696 8fc9c9 8accf5 8dabdb 8f98cd 9186c0 a88dc0 c096c3 efa2c6 eda1a4 e66a45 ed914d f5b355 ffee55 b9ce60 8abd66 4faa69 3fafb0 27b4ee
4e8cca 5a71b5 6357a0 8b5fa1 ab62a1 e873a5 e86e7a dc321b e56309 ee9500 ffeb00 9abd00 4ba52c 009237 009492 009ce6 0067b3 0f4a98 312983
642a82 922c82 e0307f de3153 98200d 9b4400 a26800 b1a200 698300 31751e 00662b 00676a 006ba0 00497d 07326b 241b5e 481b5d 681b5c 9b1d57
9a2238 741900 753200 7a4e00 857a00 4f6400 225812 004b1b 004d4d 005178 00345d 052450 1c1047 361044 4f1044 761441 741924 cbb9a2 a1907e
7d6a5a 5b4b41 3c302c c8a674 ab854f 936a37 7c5120 653b0e e4dc00`
  .trim()
  .split(/\s+/);

function SwatchPanel() {
  return (
    <section className="flex min-h-0 flex-1 flex-col">
      <Tabs active={0} items={[["Vzorník", "w-[56px]"]]} />
      <div className="mt-2 mb-[2px] ml-1 flex h-[19px] shrink-0 gap-px self-start border border-[#222] bg-[#222] p-px">
        {RECENT.map((c, i) => (
          <button key={i} aria-label={`Poslední ${c}`} className="h-full w-[15px]" style={{ backgroundColor: c }} />
        ))}
      </div>
      <div className="flex min-h-0 flex-1 justify-between border-t border-[#252525] bg-[#272727]">
        <div className="grid grid-cols-[repeat(19,17px)] content-start gap-px">
          {SWATCHES.map((c, i) => (
            <button key={i} aria-label={`Barva #${c}`} className="h-[17px]" style={{ backgroundColor: `#${c}` }} />
          ))}
        </div>
        <div className="w-4 bg-[#242424]" />
      </div>
      <div className="flex h-6 shrink-0 items-center justify-end gap-[18px] pr-[29px]">
        <button aria-label="Nový vzorek" className="text-[#d6d6d6]">
          <NewGlyph />
        </button>
        <button aria-label="Odstranit vzorek" className="text-[#858585]">
          <TrashGlyph />
        </button>
      </div>
    </section>
  );
}

const SERIF = "Liberation Serif";

function Field({ label, value, icon, width, iconWidth, arrow = true }: { label: string; value: string; icon: ReactNode; width: string; iconWidth: string; arrow?: boolean }) {
  return (
    <div className="flex items-center">
      <span className={`flex ${iconWidth}`}>{icon}</span>
      <label className={`relative h-[18px] border-b border-[#5e5e5e] ${width}`}>
        <input aria-label={label} defaultValue={value} className="size-full bg-transparent pl-1 outline-none" />
        {arrow && <Chevron className="absolute top-[7px] right-[2px] text-[#b8b8b8]" />}
      </label>
    </div>
  );
}

function TextIcon({ w, h, children }: { w: number; h: number; children: ReactNode }) {
  return (
    <Icon w={w} h={h} className="text-[#d6d6d6]">
      <g fill="currentColor" fontFamily={SERIF} fontWeight="bold">
        {children}
      </g>
    </Icon>
  );
}

const Rule = ({ className = "" }: { className?: string }) => <div className={`h-px w-[214px] bg-[#272727] ${className}`} />;

const STYLES: [string, ReactNode][] = [
  ["Falešné tučné", <b key="s" className="[-webkit-text-stroke:1px_currentColor]">T</b>],
  ["Falešná kurzíva", <i key="s">T</i>],
  ["Samé verzálky", <span key="s">TT</span>],
  ["Kapitálky", <span key="s">T<span className="text-[10px]">T</span></span>],
  ["Horní index", <span key="s">T<sup className="text-[9px]">1</sup></span>],
  ["Dolní index", <span key="s">T<sub className="text-[9px]">1</sub></span>],
  ["Podtržené", <span key="s" className="border-b border-current leading-[13px]">T</span>],
  ["Přeškrtnuté", <span key="s" className="line-through">T</span>],
];

const OPEN_TYPE: [string, ReactNode][] = [
  ["Ligatury", "ﬁ"],
  ["Kontextové", <i key="o">ơ</i>],
  ["Podmíněné ligatury", "ﬆ"],
  ["Ozdobné", <i key="o" className="text-[13px]">𝒜</i>],
  ["Stylistické", <span key="o" className="border-t border-current leading-[12px]">ad</span>],
  ["Titulky", <i key="o">T</i>],
  ["Pořadové", <span key="o">1<sup className="text-[10px]">st</sup></span>],
  ["Zlomky", "½"],
];

function CharacterPanel() {
  return (
    <section className="shrink-0 text-[#dedede]">
      <Tabs
        active={0}
        items={[
          ["Znaky", "w-[48px]"],
          ["Odstavec", "w-[60px]"],
        ]}
      />
      <div className="h-[222px] pl-[3px]">
        <div className="flex gap-2 pt-[9px] pl-1">
          <Select label="Písmo" value="Age" pad="pl-[5px]" className="h-[19px] w-[122px] border-b border-[#5e5e5e]" />
          <Select label="Řez písma" value="Regular" pad="pl-[5px]" className="h-[19px] w-[76px] border-b border-[#3e3e3e] text-[#6f6f6f]" />
        </div>
        <Rule className="mt-1" />
        <div className="flex h-[22px] items-end pl-[1px]">
          <Field
            label="Velikost písma"
            value="58,33 b"
            width="w-[78px]"
            iconWidth="w-5"
            icon={
              <TextIcon w={18} h={15}>
                <text x="0" y="14" fontSize="9">T</text>
                <text x="5" y="14" fontSize="19">T</text>
              </TextIcon>
            }
          />
          <div className="w-[17px]" />
          <Field
            label="Řádkování"
            value="54,17 b"
            width="w-[73px]"
            iconWidth="w-5"
            icon={
              <Icon w={17} h={17} className="text-[#d6d6d6]">
                <g fill="currentColor" fontFamily="Noto Sans" fontSize="9">
                  <text x="7" y="7">A</text>
                  <text x="7" y="16">A</text>
                </g>
                <path d="M5 7.500h12M5 16.500h12M2.500 7v8" stroke="currentColor" />
                <path d="M0 8.500L2.500 5 5 8.500zM0 13.500L2.500 17 5 13.500z" fill="currentColor" />
              </Icon>
            }
          />
        </div>
        <div className="flex h-[22px] items-end pl-[1px]">
          <Field
            label="Kerning"
            value="Z metriky"
            width="w-[78px]"
            iconWidth="w-5"
            icon={
              <Icon w={18} h={17} className="text-[#d6d6d6]">
                <path d="M.5 2l3 9 3-9M12 11l2.500-8h.5l2.500 8M13 8.500h4M7.500 13L11 0" stroke="currentColor" strokeWidth="1.200" />
                <path d="M10 14.500h8" stroke="currentColor" />
                <path d="M12.500 12v5L9 14.500z" fill="currentColor" />
              </Icon>
            }
          />
          <div className="w-[17px]" />
          <Field
            label="Prostrkání"
            value="25"
            width="w-[73px]"
            iconWidth="w-5"
            icon={
              <Icon w={18} h={17}>
                <path d="M0 0h18v11H0z" fill="#d6d6d6" />
                <path d="M2 1.500l3 8 3-8M9.500 9.500l3-8 3 8M10.500 7h4" stroke="#222" strokeWidth="1.500" />
                <path d="M2 14.500h14" stroke="#d6d6d6" />
                <path d="M3.500 12v5L0 14.500zM14.500 12v5l3.500-2.500z" fill="#d6d6d6" />
              </Icon>
            }
          />
        </div>
        <Rule className="mt-[5px]" />
        <div className="flex h-5 items-end pl-[1px]">
          <Field
            label="Svislé měřítko"
            value="100 %"
            width="w-[56px]"
            iconWidth="w-[21px]"
            arrow={false}
            icon={
              <TextIcon w={18} h={14}>
                <text x="5.500" y="13.500" fontSize="19">T</text>
                <path d="M2.500 2v10" stroke="currentColor" />
                <path d="M0 4l2.500-4L5 4zM0 10l2.500 4L5 10z" />
              </TextIcon>
            }
          />
          <div className="w-[48px]" />
          <Field
            label="Vodorovné měřítko"
            value="100 %"
            width="w-[56px]"
            iconWidth="w-[22px]"
            arrow={false}
            icon={
              <TextIcon w={18} h={16}>
                <text x="2.500" y="11" fontSize="17" stroke="currentColor">T</text>
                <path d="M2 13.500h14" stroke="currentColor" />
                <path d="M3.500 11v5L0 13.500zM14.500 11v5l3.500-2.500z" />
              </TextIcon>
            }
          />
        </div>
        <div className="flex h-[22px] items-end pl-[1px]">
          <Field
            label="Posun účaří"
            value="0 b"
            width="w-[56px]"
            iconWidth="w-[21px]"
            arrow={false}
            icon={
              <Icon w={17} h={15} className="text-[#d6d6d6]">
                <g fill="currentColor" fontFamily="Noto Sans">
                  <text x="0" y="11" fontSize="13">A</text>
                  <text x="9.500" y="6" fontSize="9">a</text>
                </g>
                <path d="M1 12.500h8M10 7.500h6M13 9v6" stroke="currentColor" />
                <path d="M10.500 12L13 9l2.500 3z" fill="currentColor" />
              </Icon>
            }
          />
          <span className="w-[70px] pr-2 text-right leading-[18px] text-[#9a9a9a]">Barva:</span>
          <button aria-label="Barva textu" className="h-5 w-[56px] border border-[#1b1b1b] bg-black" />
        </div>
        <Rule className="mt-[5px]" />
        <div className="flex h-[31px] items-center gap-px pl-[10px] font-['Liberation_Serif'] text-[15px] leading-none font-bold text-[#d6d6d6]">
          {STYLES.map(([name, s], i) => (
            <button
              key={name}
              aria-label={name}
              className={`flex h-[22px] w-[23px] items-center justify-center rounded-xs border ${
                i === 2 ? "border-[#353535] bg-[#191919]" : "border-transparent"
              }`}
            >
              {s}
            </button>
          ))}
        </div>
        <Rule />
        <div className="flex h-[31px] items-center gap-px pl-[10px] font-['Liberation_Serif'] text-[17px] leading-none text-[#858585]">
          {OPEN_TYPE.map(([name, s]) => (
            <button key={name} aria-label={name} className="flex h-[22px] w-[23px] items-center justify-center">
              {s}
            </button>
          ))}
        </div>
        <Rule />
        <div className="flex items-center pt-1 pl-[5px]">
          <Select label="Jazyk" value="Český" className={`h-[19px] w-[111px] ${BOXED}`} />
          <span className="flex h-[19px] w-6 justify-center font-['Noto_Sans'] text-[11px] leading-3 text-[#d0d0d0]">
            <span>a</span>
            <span className="self-end">a</span>
          </span>
          <Select label="Vyhlazení" value="Nejostře..." className={`h-[19px] w-[68px] ${BOXED}`} />
        </div>
      </div>
    </section>
  );
}

/* ---------- page ---------- */

export default function App() {
  return (
    <div className={`relative flex h-screen flex-col overflow-hidden bg-black pb-[2px] text-[10px] ${CZ}`}>
      <MenuBar />
      <OptionsBar />
      <div className="flex min-h-0 flex-1 bg-[#1b1b1b] pr-px">
        <main className="relative mr-px flex-1 bg-[#060606]">
          <ToolPalette />
        </main>
        <IconDock />
        <div className="ml-[2px] flex w-[279px] shrink-0 flex-col bg-[#2e2e2e]">
          <div className="flex h-[12px] shrink-0 items-center justify-end bg-[#222] pr-[6px] text-[#b5b5b5]">
            <DoubleArrow />
          </div>
          <LayersPanel />
          <Gap />
          <ActionsPanel />
        </div>
        <div className="ml-[3px] flex w-[370px] shrink-0 flex-col bg-[#2e2e2e]">
          <div className="flex h-[12px] shrink-0 items-center justify-end bg-[#222] pr-[6px] text-[#b5b5b5]">
            <DoubleArrow />
          </div>
          <InfoPanel />
          <Gap />
          <ChannelsPanel />
          <Gap />
          <ColorPanel />
          <Gap />
          <SwatchPanel />
          <Gap />
          <Tabs
            active={1}
            items={[
              ["Zdroj klonování", "w-[94px]"],
              ["Stopa", "w-[47px]"],
            ]}
          />
          <Gap tall />
          <CharacterPanel />
        </div>
      </div>
      <Splash />
    </div>
  );
}
